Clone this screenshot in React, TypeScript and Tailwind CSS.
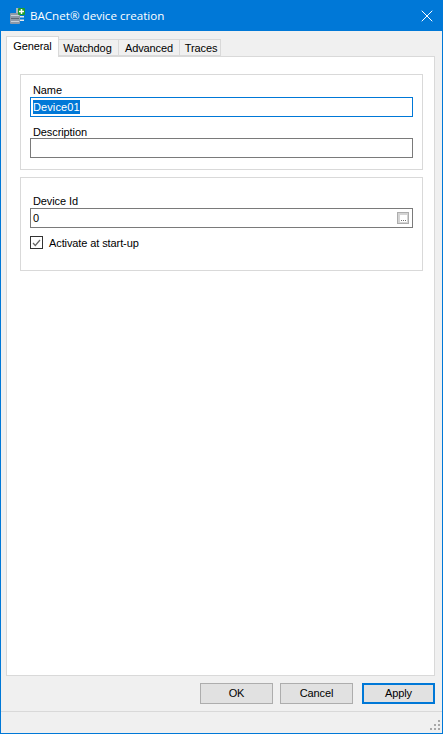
import { X } from "lucide-react";

const font = "font-['Liberation_Sans',sans-serif] text-[11px] tracking-[-0.1px] text-black";

function Tab({ label, active, width, extra = "" }: { label: string; active?: boolean; width: string; extra?: string }) {
  if (active) {
    return (
      <div className={`relative z-10 -mb-px h-[21px] ${width} border border-b-0 border-[#d9d9d9] bg-white text-center leading-[18px] ${font}`}>
        {label}
      </div>
    );
  }
  return (
    <div className={`h-[17px] ${width} -ml-px border border-[#d9d9d9] bg-[#f0f0f0] text-center leading-[16px] ${extra} ${font}`}>
      {label}
    </div>
  );
}

function AppIcon() {
  return (
    <svg width="16" height="16" viewBox="0 0 16 16" className="shrink-0">
      <rect x="6" y="0" width="3" height="6" fill="#aab4c0" />
      <rect x="0" y="5" width="10" height="11" rx="1" fill="#8d99a8" />
      <rect x="1" y="7" width="8" height="1" fill="#c9d1da" />
      <rect x="1" y="10" width="8" height="1" fill="#5d6875" />
      <rect x="1" y="13" width="8" height="1" fill="#c9d1da" />
      <path d="M10 8h4v1.500h-4zM10 11.500h4V13h-4z" fill="#e4e8ec" />
      <rect x="8" y="0" width="7" height="7" rx="1" fill="#1e9e2e" />
      <path d="M10.750 1h1.500v1.750H14v1.500h-1.750V6h-1.500V4.250H9v-1.500h1.750z" fill="#ffffff" />
    </svg>
  );
}

export default function App() {
  return (
    <div className="flex h-[734px] w-[443px] flex-col border-x border-b border-[#0078d7] bg-[#f0f0f0]">
      <div className="flex h-[31px] shrink-0 items-center bg-[#0078d7] pl-[9px] pr-[5px]">
        <AppIcon />
        <span className="ml-[4px] font-['Open_Sans',sans-serif] text-[11.6px] text-white">BACnet® device creation</span>
        <X className="ml-auto size-[20px] text-white" strokeWidth={1.2} />
      </div>

      <div className="flex min-h-0 flex-1 flex-col pl-[5px] pr-[7px]">
        <div className="flex h-[25px] shrink-0 items-end">
          <Tab label="General" active width="w-[53px]" />
          <Tab label="Watchdog" width="w-[61px]" extra="pr-[2px]" />
          <Tab label="Advanced" width="w-[62px]" />
          <Tab label="Traces" width="w-[42px]" extra="pl-[2px]" />
        </div>

        <div className="flex flex-1 flex-col gap-[7px] border border-[#d9d9d9] bg-white pl-[13px] pr-[11px] pt-[17px]">
          <div className="h-[96px] border border-[#d9d9d9] px-[9px] pt-[9px]">
            <div className={`pl-[3px] leading-[13px] ${font}`}>Name</div>
            <div className={`flex h-[20px] items-center border border-[#0078d7] pl-[2px] ${font}`}>
              <span className="bg-[#0078d7] leading-[14px] tracking-[0.1px] text-white">Device01</span>
            </div>
            <div className={`mt-[9px] pl-[3px] leading-[12px] ${font}`}>Description</div>
            <div className="h-[20px] border border-[#7a7a7a]" />
          </div>

          <div className="h-[94px] border border-[#d9d9d9] px-[9px] pt-[17px]">
            <div className={`pl-[3px] leading-[13px] ${font}`}>Device Id</div>
            <div className={`flex h-[20px] items-center justify-between border border-[#7a7a7a] pl-[2px] pr-[3px] ${font}`}>
              <span>0</span>
              <div className="flex size-[12px] items-center justify-center border border-[#adadad] bg-[#d4d4d4]">
                <div className="flex size-[7px] items-end justify-center bg-white">
                  <svg width="7" height="1" className="mb-px"><path d="M1 0h1v1H1zM3 0h1v1H3zM5 0h1v1H5z" fill="#707070" /></svg>
                </div>
              </div>
            </div>
            <div className="mt-[8px] flex items-start gap-[6px]">
              <div className="flex size-[13px] items-center justify-center border border-[#333333] bg-white">
                <svg width="9" height="8" viewBox="0 0 9 8"><path d="M1 4 3.300 6.500 8 1" fill="none" stroke="#666666" strokeWidth="1.200" /></svg>
              </div>
              <span className={`leading-[14px] ${font}`}>Activate at start-up</span>
            </div>
          </div>
        </div>

        <div className="flex h-[35px] shrink-0 items-center justify-end gap-[7px] pb-[1px]">
          <button className={`h-[21px] w-[73px] border border-[#adadad] bg-[#e1e1e1] ${font}`}>OK</button>
          <button className={`h-[21px] w-[73px] border border-[#adadad] bg-[#e1e1e1] ${font}`}>Cancel</button>
          <button className={`ml-[2px] h-[21px] w-[73px] border-2 border-[#0078d7] bg-[#e1e1e1] ${font}`}>Apply</button>
        </div>
      </div>

      <div className="relative h-[22px] shrink-0 border-t border-[#d9d9d9]">
        <svg width="12" height="12" className="absolute bottom-[2px] right-[1px]">
          <path d="M9 1h2v2H9zM5 5h2v2H5zM9 5h2v2H9zM1 9h2v2H1zM5 9h2v2H5zM9 9h2v2H9z" fill="#a8a8a8" />
        </svg>
      </div>
    </div>
  );
}
